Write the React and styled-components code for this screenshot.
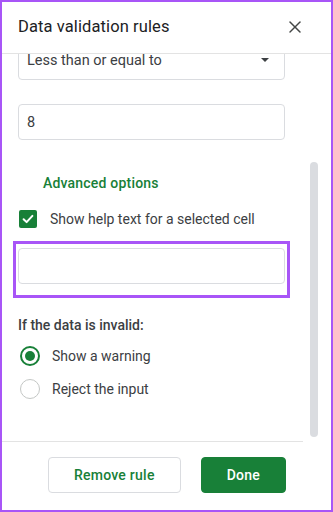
import React, { useLayoutEffect, useRef, useState } from "react";
import styled, { createGlobalStyle } from "styled-components";
import { X } from "lucide-react";

const GlobalStyle = createGlobalStyle`
  html, body {
    margin: 0;
    padding: 0;
    background: #fff;
  }
  body {
    font-family: Roboto, "Noto Sans", Arial, sans-serif;
    color: #3c4043;
  }
  * {
    box-sizing: border-box;
  }
`;

function Dialog() {
  const viewRef = useRef(null);
  const [thumb, setThumb] = useState({ top: 0, height: 0 });

  useLayoutEffect(() => {
    const el = viewRef.current;
    el.scrollTop = el.scrollHeight;
    const track = el.clientHeight - 8;
    setThumb({
      top: (el.scrollTop / el.scrollHeight) * track,
      height: (el.clientHeight / el.scrollHeight) * track,
    });
  }, []);

  return (
    <Frame>
      <Header>
        <Title>Data validation rules</Title>
        <CloseButton aria-label="Close">
          <X size={20} strokeWidth={1.8} />
        </CloseButton>
      </Header>

      <Body>
        <Viewport ref={viewRef}>
          <Content>
            <SectionLabel>Apply to range</SectionLabel>
            <TextBox>Sheet1!A1:A1000</TextBox>
            <SectionLabel $gap={24}>Criteria</SectionLabel>
            <TextBox $height={40}>
              Less than or equal to
              <Caret />
            </TextBox>
            <TextBox $gap={24}>8</TextBox>

            <AdvancedLink>Advanced options</AdvancedLink>

            <CheckRow>
              <CheckBox>
                <svg width="14" height="14" viewBox="0 0 14 14">
                  <path
                    d="M2.6 7.2 L5.6 10.1 L11.4 3.9"
                    fill="none"
                    stroke="#fff"
                    strokeWidth="2"
                    strokeLinecap="round"
                    strokeLinejoin="round"
                  />
                </svg>
              </CheckBox>
              <span>Show help text for a selected cell</span>
            </CheckRow>

            <Highlighted>
              <TextBox />
              <HighlightRing />
            </Highlighted>

            <SectionLabel $gap={31}>If the data is invalid:</SectionLabel>
            <RadioList>
              <RadioRow>
                <Radio $checked />
                <span>Show a warning</span>
              </RadioRow>
              <RadioRow>
                <Radio />
                <span>Reject the input</span>
              </RadioRow>
            </RadioList>
          </Content>
        </Viewport>
        <Track>
          <Thumb style={{ marginTop: thumb.top, height: thumb.height }} />
        </Track>
      </Body>

      <Footer>
        <Divider />
        <Actions>
          <Button>Remove rule</Button>
          <Button $primary>Done</Button>
        </Actions>
      </Footer>
    </Frame>
  );
}

export default function App() {
  return (
    <>
      <GlobalStyle />
      <Dialog />
    </>
  );
}

const Frame = styled.div`
  width: 333px;
  height: 512px;
  border: 2px solid #a855f7;
  background: #fff;
  display: flex;
  flex-direction: column;
  overflow: hidden;
`;

const Header = styled.div`
  flex: none;
  height: 52px;
  display: flex;
  align-items: center;
  justify-content: space-between;
  padding: 0 26px 2px 16px;
  border-bottom: 1px solid #e3e3e3;
`;

const Title = styled.div`
  font-size: 16.5px;
  color: #202124;
  letter-spacing: 0.1px;
`;

const CloseButton = styled.button`
  display: flex;
  border: none;
  background: none;
  padding: 0;
  color: #444746;
  cursor: pointer;
`;

const Body = styled.div`
  flex: none;
  height: 387px;
  display: flex;
  padding-right: 9px;
`;

const Viewport = styled.div`
  flex: 1;
  overflow-y: auto;
  scrollbar-width: none;
  &::-webkit-scrollbar {
    display: none;
  }
`;

const Content = styled.div`
  display: flex;
  flex-direction: column;
  padding: 16px 21px 36px 16px;
`;

const Track = styled.div`
  flex: none;
  width: 16px;
  padding: 4px;
`;

const Thumb = styled.div`
  width: 8px;
  border-radius: 4px;
  background: #dadce0;
`;

const SectionLabel = styled.div`
  margin-top: ${(p) => p.$gap || 0}px;
  margin-bottom: 8px;
  font-size: 14px;
  line-height: 20px;
  font-weight: 500;
  color: #3c4043;
`;

const TextBox = styled.div`
  margin-top: ${(p) => p.$gap || 0}px;
  height: ${(p) => p.$height || 36}px;
  border: 1px solid #dadce0;
  border-radius: 4px;
  display: flex;
  align-items: center;
  justify-content: space-between;
  padding: 0 15px 0 8px;
  font-size: 14.5px;
  color: #3c4043;
`;

const Caret = styled.span`
  width: 0;
  height: 0;
  border-left: 4.5px solid transparent;
  border-right: 4.5px solid transparent;
  border-top: 4.5px solid #3c4043;
`;

const AdvancedLink = styled.div`
  margin-top: 33px;
  padding-left: 25px;
  font-size: 14px;
  line-height: 20px;
  font-weight: 500;
  color: #188038;
  letter-spacing: 0.2px;
`;

const CheckRow = styled.div`
  margin-top: 16px;
  display: flex;
  align-items: center;
  gap: 13px;
  height: 20px;
  padding-left: 1px;
  font-size: 14px;
  color: #3c4043;
`;

const CheckBox = styled.span`
  width: 18px;
  height: 18px;
  border-radius: 2px;
  background: #188038;
  display: flex;
  align-items: center;
  justify-content: center;
`;

const Highlighted = styled.div`
  position: relative;
  margin-top: 19px;
`;

const HighlightRing = styled.div`
  position: absolute;
  left: -5px;
  right: -5px;
  top: -7px;
  bottom: -14px;
  border: 3px solid #a855f7;
  pointer-events: none;
`;

const RadioList = styled.div`
  display: flex;
  flex-direction: column;
  margin-top: -4px;
`;

const RadioRow = styled.div`
  height: 33px;
  display: flex;
  align-items: center;
  gap: 12px;
  padding-left: 2px;
  font-size: 14px;
  color: #3c4043;
`;

const Radio = styled.span`
  width: 20px;
  height: 20px;
  border-radius: 50%;
  border: ${(p) => (p.$checked ? "2px solid #188038" : "1.5px solid #c4c7c5")};
  display: flex;
  align-items: center;
  justify-content: center;
  &::after {
    content: "";
    width: 10px;
    height: 10px;
    border-radius: 50%;
    background: ${(p) => (p.$checked ? "#188038" : "transparent")};
  }
`;

const Footer = styled.div`
  flex: 1;
  display: flex;
  flex-direction: column;
`;

const Divider = styled.div`
  height: 1px;
  margin-right: 28px;
  background: #e3e3e3;
`;

const Actions = styled.div`
  display: flex;
  justify-content: flex-end;
  gap: 20px;
  padding: 15px 45px 0 0;
`;

const Button = styled.button`
  height: 36px;
  padding: 0 25px;
  border-radius: 4px;
  border: 1px solid ${(p) => (p.$primary ? "#188038" : "#dadce0")};
  background: ${(p) => (p.$primary ? "#188038" : "#fff")};
  color: ${(p) => (p.$primary ? "#fff" : "#188038")};
  font-family: Roboto, "Noto Sans", Arial, sans-serif;
  font-size: 14px;
  font-weight: 500;
  letter-spacing: 0.25px;
  cursor: pointer;
`;
